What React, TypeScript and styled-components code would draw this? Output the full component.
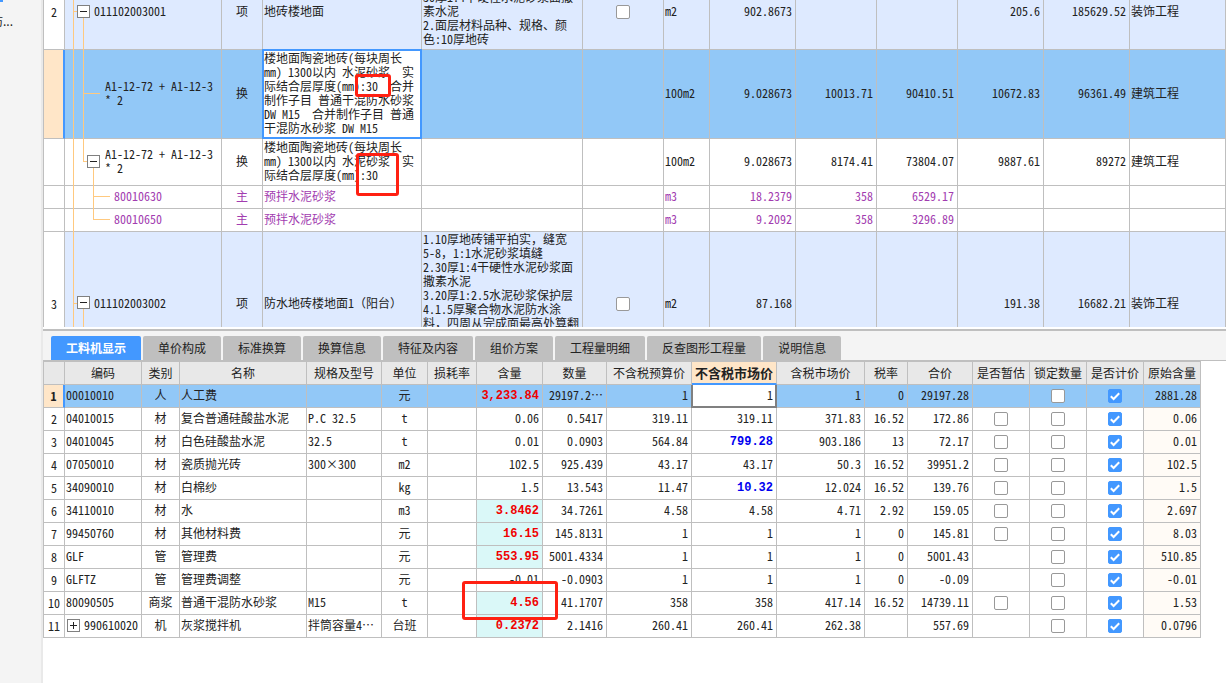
import React, { useLayoutEffect, useRef } from "react";
import styled, { createGlobalStyle, css } from "styled-components";

const c = {
  line: "#bfbfbf",
  parent: "#deeaff",
  selected: "#92c8f7",
  blue: "#4398ff",
  peach: "#ffe6c8",
  guide: "#ffc97f",
  purple: "#a23cb0",
  chrome: "#f4f4f4",
};

const Global = createGlobalStyle`
  *, *::before, *::after { box-sizing: border-box; }
  html, body { margin: 0; height: 100%; }
  body {
    background: #fff;
    color: #222;
    font: 12px/14px "Noto Sans CJK SC", sans-serif;
    font-feature-settings: "hwid" 1;
  }
  #root { height: 100%; }
`;

const Page = styled.div`
  display: flex;
  height: 100vh;
  overflow: hidden;
`;

const Sidebar = styled.aside`
  flex: 0 0 43px;
  background: ${c.chrome};
  border-right: 2px solid #e9e9e9;
  overflow: hidden;
`;

const SidebarMark = styled.div`
  width: 3px;
  height: 2px;
  background: ${c.blue};
`;

const SidebarItem = styled.div`
  display: flex;
  justify-content: flex-end;
  width: 13px;
  padding-top: 12px;
  font-feature-settings: normal;
  white-space: nowrap;
`;

const Main = styled.main`
  flex: 1;
  min-width: 0;
  display: flex;
  flex-direction: column;
`;

const TopPane = styled.section`
  flex: 1 1 0;
  min-height: 0;
  overflow: auto;
  scrollbar-width: none;
`;

const BottomPane = styled.section`
  flex: none;
  padding-bottom: 45px;
  border-top: 2px solid ${c.line};
  margin-top: 2px;
`;

const Table = styled.table`
  table-layout: fixed;
  border-collapse: separate;
  border-spacing: 0;
  border-left: 1px solid ${c.line};
`;

const BillTable = styled(Table)`
  width: 100%;
  min-width: 1183px;
`;

const ResourceTable = styled(Table)`
  width: 1158px;
  border-top: 1px solid ${c.line};
`;

type Align = "left" | "center" | "right";
type Tone = "plain" | "parent" | "selected";

const tones: Record<Tone, string> = {
  plain: "#fff",
  parent: c.parent,
  selected: c.selected,
};

const Row = styled.tr<{ $tone?: Tone; $height: number; $ink?: string }>`
  height: ${(p) => p.$height}px;
  background: ${(p) => tones[p.$tone ?? "plain"]};
  color: ${(p) => p.$ink ?? "inherit"};
`;

const Cell = styled.td<{ $align?: Align; $bg?: string; $top?: boolean }>`
  position: relative;
  padding: 0 1px 2px;
  border-right: 1px solid ${c.line};
  border-bottom: 1px solid ${c.line};
  text-align: ${(p) => p.$align ?? "left"};
  vertical-align: ${(p) => (p.$top ? "top" : "middle")};
  white-space: pre;
  background: ${(p) => p.$bg ?? "transparent"};
  ${(p) => p.$align === "right" && css`padding-right: 3px;`}
`;

const FocusCell = styled(Cell)`
  background: #fff;
  &::after {
    content: "";
    position: absolute;
    inset: -1px;
    border: 2px solid ${c.blue};
  }
`;

const EditCell = styled(Cell)`
  background: #fff;
  padding-right: 0;
  &::after {
    content: "";
    position: absolute;
    inset: 0 -1px -1px;
    border: 2px solid #808080;
    border-top: 0;
    pointer-events: none;
  }
`;

const EditBox = styled.input`
  display: block;
  width: 100%;
  height: 14px;
  padding: 0 3px 0 0;
  border: 0;
  outline: 0;
  background: transparent;
  color: inherit;
  font: inherit;
  font-feature-settings: inherit;
  text-align: right;
`;

const RowHead = styled.th<{ $current?: boolean; $bold?: boolean }>`
  padding: 0;
  background: ${(p) => (p.$current ? c.peach : "#fff")};
  border-right: ${(p) => (p.$current ? `2px solid ${c.blue}` : `1px solid ${c.line}`)};
  border-bottom: 1px solid ${c.line};
  font-weight: ${(p) => (p.$bold ? 700 : 400)};
  text-align: center;
`;

const ColHead = styled.th<{ $current?: boolean }>`
  padding: 0;
  background: ${(p) => (p.$current ? c.peach : "#e8e8e8")};
  border-right: 1px solid ${c.line};
  border-bottom: ${(p) => (p.$current ? `2px solid ${c.blue}` : `1px solid ${c.line}`)};
  font-size: ${(p) => (p.$current ? 13 : 12)}px;
  font-weight: ${(p) => (p.$current ? 700 : 400)};
  text-align: center;
  white-space: nowrap;
`;

const Strong = styled.b<{ $color: string }>`
  font: bold 12px/14px "Liberation Mono", monospace;
  color: ${(p) => p.$color};
`;

const FullWidth = styled.span`
  font-feature-settings: normal;
`;

const Check = styled.input.attrs({ type: "checkbox" })`
  appearance: none;
  display: block;
  width: 14px;
  height: 14px;
  margin: 2px auto 0;
  border: 1px solid #999;
  border-radius: 2px;
  background: #fff;
  &:checked {
    border-color: ${c.blue};
    background: ${c.blue};
  }
`;

const CheckWrap = styled.span`
  display: grid;
  justify-content: center;
  & > * { grid-area: 1 / 1; }
  & > svg {
    margin-top: 2px;
    z-index: 1;
    pointer-events: none;
  }
`;

const ToggleButton = styled.button`
  position: relative;
  flex: none;
  width: 13px;
  height: 13px;
  padding: 0;
  border: 1px solid #808080;
  background: #fff;
  display: grid;
  place-items: center;
`;

const TreeLabel = styled.div<{ $indent: number; $gap?: number }>`
  display: flex;
  align-items: center;
  gap: ${(p) => p.$gap ?? 4}px;
  padding-left: ${(p) => p.$indent}px;
`;

const VGuide = styled.i<{ $x: number; $from?: string; $to?: string }>`
  position: absolute;
  left: ${(p) => p.$x}px;
  top: ${(p) => p.$from ?? "0"};
  bottom: ${(p) => p.$to ?? "-1px"};
  width: 1px;
  background: ${c.guide};
`;

const HGuide = styled.i<{ $x: number; $w: number }>`
  position: absolute;
  left: ${(p) => p.$x}px;
  top: calc(50% - 1px);
  width: ${(p) => p.$w}px;
  height: 1px;
  background: ${c.guide};
`;

const Marker = styled.span<{ $x: number; $y: number; $w: number; $h: number }>`
  position: absolute;
  z-index: 3;
  left: ${(p) => p.$x}px;
  top: ${(p) => p.$y}px;
  width: ${(p) => p.$w}px;
  height: ${(p) => p.$h}px;
  border: 3px solid #ff2012;
  border-radius: 3px;
  pointer-events: none;
`;

const TabBar = styled.div`
  display: flex;
  gap: 2px;
  height: 30px;
  padding: 5px 8px 0;
  background: ${c.chrome};
  border-bottom: 1px solid ${c.line};
`;

const Tab = styled.button<{ $active?: boolean }>`
  height: 24px;
  padding: 0 15px;
  border: 0;
  border-radius: 2px 2px 0 0;
  background: ${(p) => (p.$active ? c.blue : c.line)};
  color: ${(p) => (p.$active ? "#fff" : "#222")};
  font: ${(p) => (p.$active ? 700 : 400)} 12px/14px "Noto Sans CJK SC", sans-serif;
  white-space: nowrap;
`;

/* Half-width forms are on for the whole page; Chinese punctuation keeps its full width. */
const Words = ({ children = "" }: { children?: string }) => (
  <>
    {children.split(/([，（）])/).map((part, i) =>
      i % 2 ? <FullWidth key={i}>{part}</FullWidth> : part,
    )}
  </>
);

const Toggle = ({ open, label }: { open: boolean; label: string }) => (
  <ToggleButton aria-label={label} aria-expanded={open}>
    <svg width="11" height="11" shapeRendering="crispEdges">
      <path d={open ? "M2 5h7v1H2z" : "M2 5h7v1H2zM5 2h1v7H5z"} fill="#222" />
    </svg>
  </ToggleButton>
);

const Box = ({ on, label }: { on: boolean; label: string }) => (
  <CheckWrap>
    <Check defaultChecked={on} aria-label={label} />
    {on && (
      <svg width="14" height="14" viewBox="0 0 14 14">
        <path d="M2.8 7.2 5.6 10 11.2 4.2" fill="none" stroke="#fff" strokeWidth="2" />
      </svg>
    )}
  </CheckWrap>
);

type Bill = {
  no?: string;
  height: number;
  tone?: Tone;
  ink?: string;
  code: string;
  depth: 0 | 1 | 2 | 3 | 4;
  kind: string;
  name: string;
  desc?: string;
  check?: boolean;
  unit: string;
  nums: string[];
  major?: string;
};

const bills: Bill[] = [
  {
    no: "2", height: 75, tone: "parent", code: "011102003001", depth: 0, kind: "项", name: "地砖楼地面",
    desc: "1.结合层厚度:\n30厚1:4干硬性水泥砂浆面撒\n素水泥\n2.面层材料品种、规格、颜\n色:10厚地砖",
    check: true, unit: "m2", nums: ["902.8673", "", "", "205.6", "185629.52"], major: "装饰工程",
  },
  {
    height: 89, tone: "selected", code: "A1-12-72 + A1-12-3\n* 2", depth: 1, kind: "换",
    name: "楼地面陶瓷地砖(每块周长\nmm) 1300以内 水泥砂浆  实\n际结合层厚度(mm):30  合并\n制作子目 普通干混防水砂浆\nDW M15  合并制作子目 普通\n干混防水砂浆 DW M15",
    unit: "100m2", nums: ["9.028673", "10013.71", "90410.51", "10672.83", "96361.49"], major: "建筑工程",
  },
  {
    height: 47, code: "A1-12-72 + A1-12-3\n* 2", depth: 2, kind: "换",
    name: "楼地面陶瓷地砖(每块周长\nmm) 1300以内 水泥砂浆  实\n际结合层厚度(mm):30",
    unit: "100m2", nums: ["9.028673", "8174.41", "73804.07", "9887.61", "89272"], major: "建筑工程",
  },
  { height: 23, ink: c.purple, code: "80010630", depth: 3, kind: "主", name: "预拌水泥砂浆", unit: "m3", nums: ["18.2379", "358", "6529.17", "", ""] },
  { height: 23, ink: c.purple, code: "80010650", depth: 4, kind: "主", name: "预拌水泥砂浆", unit: "m3", nums: ["9.2092", "358", "3296.89", "", ""] },
  {
    no: "3", height: 144, tone: "parent", code: "011102003002", depth: 0, kind: "项", name: "防水地砖楼地面1（阳台）",
    desc: "1.10厚地砖铺平拍实，缝宽\n5-8，1:1水泥砂浆填缝\n2.30厚1:4干硬性水泥砂浆面\n撒素水泥\n3.20厚1:2.5水泥砂浆保护层\n4.1.5厚聚合物水泥防水涂\n料，四周从完成面最高处算翻",
    check: true, unit: "m2", nums: ["87.168", "", "", "191.38", "16682.21"], major: "装饰工程",
  },
];

const billCols = [21, 157, 41, 159, 161, 81, 46, 86, 81, 81, 86, 86];

const BillCode = ({ bill }: { bill: Bill }) => {
  const d = bill.depth;
  return (
    <Cell>
      <VGuide $x={8} />
      {d === 0 && <><HGuide $x={8} $w={4} /><VGuide $x={18} $from="50%" /></>}
      {d === 1 && <><VGuide $x={18} /><HGuide $x={18} $w={17} /></>}
      {d === 2 && <><VGuide $x={18} $to="50%" /><HGuide $x={18} $w={4} /><VGuide $x={28} $from="50%" /></>}
      {d === 3 && <><VGuide $x={28} /><HGuide $x={28} $w={17} /></>}
      {d === 4 && <><VGuide $x={28} $to="50%" /><HGuide $x={28} $w={17} /></>}
      <TreeLabel $indent={[11, 39, 21, 48, 48][d]} $gap={d === 2 ? 5 : 4}>
        {(d === 0 || d === 2) && <Toggle open label="折叠" />}
        <span>{bill.code}</span>
      </TreeLabel>
    </Cell>
  );
};

const BillRow = ({ bill }: { bill: Bill }) => {
  const NameCell = bill.tone === "selected" ? FocusCell : Cell;
  return (
    <Row $tone={bill.tone} $height={bill.height} $ink={bill.ink}>
      <RowHead scope="row" $current={bill.tone === "selected"}>{bill.no}</RowHead>
      <BillCode bill={bill} />
      <Cell $align="center">{bill.kind}</Cell>
      <NameCell>
        <Words>{bill.name}</Words>
        {bill.depth === 1 && <Marker $x={92} $y={24} $w={36} $h={23} />}
        {bill.depth === 2 && <Marker $x={93} $y={14} $w={43} $h={43} />}
      </NameCell>
      <Cell $top={bill.height > 100}><Words>{bill.desc}</Words></Cell>
      <Cell $align="center">{bill.check && <Box on={false} label={`选择 ${bill.code}`} />}</Cell>
      <Cell>{bill.unit}</Cell>
      {bill.nums.map((n, i) => <Cell key={i} $align="right">{n}</Cell>)}
      <Cell>{bill.major}</Cell>
    </Row>
  );
};

const tabs = ["工料机显示", "单价构成", "标准换算", "换算信息", "特征及内容", "组价方案", "工程量明细", "反查图形工程量", "说明信息"];

const heads = ["编码", "类别", "名称", "规格及型号", "单位", "损耗率", "含量", "数量", "不含税预算价", "不含税市场价", "含税市场价", "税率", "合价", "是否暂估", "锁定数量", "是否计价", "原始含量"];
const resourceCols = [21, 77, 38, 127, 75, 46, 49, 66, 64, 85, 85, 88, 43, 65, 57, 57, 57, 57];

type Resource = {
  code: string; kind: string; name: string; spec: string; unit: string;
  content: string; qty: string; budget: string; market: string; taxed: string;
  rate: string; total: string; estimate: boolean; original: string;
  red?: boolean; blue?: boolean;
};

const r = (
  code: string, kind: string, name: string, spec: string, unit: string, content: string, qty: string,
  budget: string, market: string, taxed: string, rate: string, total: string, estimate: boolean,
  original: string, mark?: "red" | "blue",
): Resource => ({
  code, kind, name, spec, unit, content, qty, budget, market, taxed, rate, total, estimate, original,
  red: mark === "red", blue: mark === "blue",
});

const resources: Resource[] = [
  r("00010010", "人", "人工费", "", "元", "3,233.84", "29197.2⋯", "1", "1", "1", "0", "29197.28", false, "2881.28", "red"),
  r("04010015", "材", "复合普通硅酸盐水泥", "P.C 32.5", "t", "0.06", "0.5417", "319.11", "319.11", "371.83", "16.52", "172.86", true, "0.06"),
  r("04010045", "材", "白色硅酸盐水泥", "32.5", "t", "0.01", "0.0903", "564.84", "799.28", "903.186", "13", "72.17", true, "0.01", "blue"),
  r("07050010", "材", "瓷质抛光砖", "300×300", "m2", "102.5", "925.439", "43.17", "43.17", "50.3", "16.52", "39951.2", true, "102.5"),
  r("34090010", "材", "白棉纱", "", "kg", "1.5", "13.543", "11.47", "10.32", "12.024", "16.52", "139.76", true, "1.5", "blue"),
  r("34110010", "材", "水", "", "m3", "3.8462", "34.7261", "4.58", "4.58", "4.71", "2.92", "159.05", true, "2.697", "red"),
  r("99450760", "材", "其他材料费", "", "元", "16.15", "145.8131", "1", "1", "1", "0", "145.81", true, "8.03", "red"),
  r("GLF", "管", "管理费", "", "元", "553.95", "5001.4334", "1", "1", "1", "0", "5001.43", false, "510.85", "red"),
  r("GLFTZ", "管", "管理费调整", "", "元", "-0.01", "-0.0903", "1", "1", "1", "0", "-0.09", false, "-0.01"),
  r("80090505", "商浆", "普通干混防水砂浆", "M15", "t", "4.56", "41.1707", "358", "358", "417.14", "16.52", "14739.11", true, "1.53", "red"),
  r("990610020", "机", "灰浆搅拌机", "拌筒容量4⋯", "台班", "0.2372", "2.1416", "260.41", "260.41", "262.38", "", "557.69", false, "0.0796", "red"),
];

const ResourceRow = ({ item, index }: { item: Resource; index: number }) => {
  const first = index === 0;
  return (
    <Row $tone={first ? "selected" : "plain"} $height={23}>
      <RowHead scope="row" $current={first} $bold={first}>{index + 1}</RowHead>
      <Cell>
        {item.kind === "机" ? (
          <TreeLabel $indent={1}><Toggle open={false} label="展开" />{item.code}</TreeLabel>
        ) : item.code}
      </Cell>
      <Cell $align="center">{item.kind}</Cell>
      <Cell>{item.name}</Cell>
      <Cell>{item.spec}</Cell>
      <Cell $align="center">{item.unit}</Cell>
      <Cell />
      <Cell $align="right" $bg={item.red && !first ? "#daf8f8" : undefined}>
        {item.red ? <Strong $color="#f00000">{item.content}</Strong> : item.content}
        {item.content === "4.56" && <Marker $x={-15} $y={-11} $w={96} $h={39} />}
      </Cell>
      <Cell $align="right">{item.qty}</Cell>
      <Cell $align="right">{item.budget}</Cell>
      {first ? (
        <EditCell $align="right"><EditBox defaultValue={item.market} aria-label="不含税市场价" /></EditCell>
      ) : (
        <Cell $align="right">{item.blue ? <Strong $color="#0000f0">{item.market}</Strong> : item.market}</Cell>
      )}
      <Cell $align="right">{item.taxed}</Cell>
      <Cell $align="right">{item.rate}</Cell>
      <Cell $align="right">{item.total}</Cell>
      <Cell>{item.estimate && <Box on={false} label={`是否暂估 ${item.name}`} />}</Cell>
      <Cell><Box on={false} label={`锁定数量 ${item.name}`} /></Cell>
      <Cell><Box on label={`是否计价 ${item.name}`} /></Cell>
      <Cell $align="right" $bg={first ? undefined : "#fffbf6"}>{item.original}</Cell>
    </Row>
  );
};

export default function App() {
  const pane = useRef<HTMLElement>(null);
  /* The list opens part-way down, with item 2 at the top edge. */
  useLayoutEffect(() => {
    if (pane.current) pane.current.scrollTop = 25;
  }, []);
  return (
    <Page>
      <Global />
      <Sidebar>
        <SidebarMark />
        <SidebarItem><span>防...</span></SidebarItem>
      </Sidebar>
      <Main>
        <TopPane ref={pane}>
          <BillTable>
            <colgroup>
              {billCols.map((w, i) => <col key={i} style={{ width: w }} />)}
              <col />
            </colgroup>
            <tbody>
              {bills.map((b, i) => <BillRow key={i} bill={b} />)}
            </tbody>
          </BillTable>
        </TopPane>
        <BottomPane>
          <TabBar role="tablist">
            {tabs.map((t, i) => (
              <Tab key={t} role="tab" aria-selected={i === 0} $active={i === 0}>{t}</Tab>
            ))}
          </TabBar>
          <ResourceTable>
            <colgroup>
              {resourceCols.map((w, i) => <col key={i} style={{ width: w }} />)}
            </colgroup>
            <thead>
              <Row $height={23}>
                <ColHead aria-label="序号" />
                {heads.map((h) => <ColHead key={h} scope="col" $current={h === "不含税市场价"}>{h}</ColHead>)}
              </Row>
            </thead>
            <tbody>
              {resources.map((item, i) => <ResourceRow key={item.code} item={item} index={i} />)}
            </tbody>
          </ResourceTable>
        </BottomPane>
      </Main>
    </Page>
  );
}
